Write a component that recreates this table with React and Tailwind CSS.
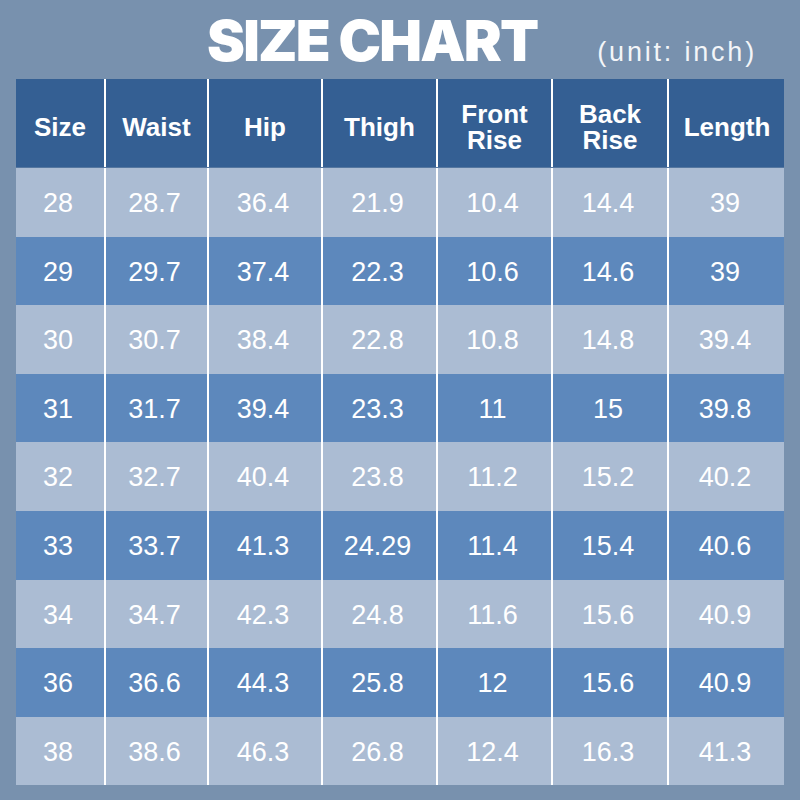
import React from 'react';

const headers = ['Size', 'Waist', 'Hip', 'Thigh', ['Front', 'Rise'], ['Back', 'Rise'], 'Length'];

const rows = [
    ['28', '28.7', '36.4', '21.9', '10.4', '14.4', '39'],
    ['29', '29.7', '37.4', '22.3', '10.6', '14.6', '39'],
    ['30', '30.7', '38.4', '22.8', '10.8', '14.8', '39.4'],
    ['31', '31.7', '39.4', '23.3', '11', '15', '39.8'],
    ['32', '32.7', '40.4', '23.8', '11.2', '15.2', '40.2'],
    ['33', '33.7', '41.3', '24.29', '11.4', '15.4', '40.6'],
    ['34', '34.7', '42.3', '24.8', '11.6', '15.6', '40.9'],
    ['36', '36.6', '44.3', '25.8', '12', '15.6', '40.9'],
    ['38', '38.6', '46.3', '26.8', '12.4', '16.3', '41.3'],
];

const cols = 'grid grid-cols-[88px_103px_114px_115px_115px_116px_118px]';

export default function App() {
    return (
        <div className="w-[800px] h-[800px] bg-[#7891ae] overflow-hidden font-['Liberation_Sans',Arial,sans-serif] text-white">
            <div className="h-[79px] flex items-baseline pl-[207px] pt-[7px]">
                <h1 className="font-['Inter',sans-serif] font-black text-[57px] leading-[68px] tracking-[-1.8px]">SIZE CHART</h1>
                <span className="ml-[60px] text-[27px] tracking-[2.8px] text-[#f3f5f8]">(unit: inch)</span>
            </div>

            <div className="mx-[16px]">
                <div className={`${cols} h-[89px] bg-[#345f93] border-b border-[#5577a0]`}>
                    {headers.map((h, i) => (
                        <div
                            key={i}
                            className={`flex flex-col items-center justify-center font-bold text-[26px] leading-[26px] pt-[8px] ${i > 0 ? 'border-l-2 border-white' : ''}`}
                        >
                            {Array.isArray(h) ? h.map((t) => <span key={t}>{t}</span>) : h}
                        </div>
                    ))}
                </div>

                {rows.map((r, ri) => (
                    <div
                        key={ri}
                        className={`${cols} h-[68.6px] ${ri % 2 === 0 ? 'bg-[#abbcd3]' : 'bg-[#5d88bc]'}`}
                    >
                        {r.map((v, ci) => (
                            <div
                                key={ci}
                                className={`flex items-center justify-center text-[27px] pr-[4px] pt-[2px] ${ci > 0 ? 'border-l-2 border-white' : ''}`}
                            >
                                {v}
                            </div>
                        ))}
                    </div>
                ))}
            </div>
        </div>
    );
}
